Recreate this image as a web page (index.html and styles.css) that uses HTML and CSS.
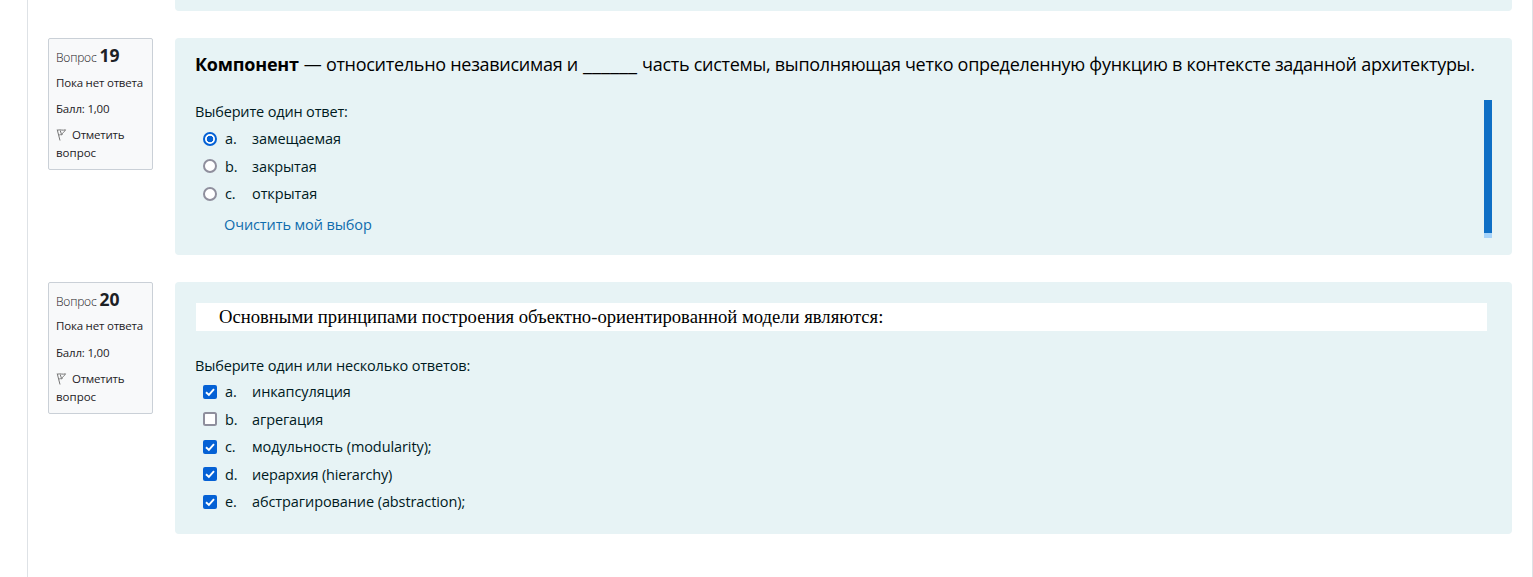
FILE: index.html
```html
<!DOCTYPE html>
<html lang="ru">
<head>
<meta charset="utf-8">
<title>Тест</title>
<link rel="stylesheet" href="styles.css">
</head>
<body>
<main class="page">
  <section class="question question-prev">
    <div class="side"></div>
    <div class="panel panel-prev"></div>
  </section>

  <section class="question question-single">
    <aside class="info">
      <h3 class="info-title"><span class="info-word">Вопрос</span> <span class="info-number">19</span></h3>
      <div class="info-state">Пока нет ответа</div>
      <div class="info-grade">Балл: 1,00</div>
      <div class="info-flag"><svg class="flag" viewBox="0 0 12 14" width="12" height="14"><path d="M1.2 1.5 4 12.5M1.5 2.2C4 1.2 6.500 2.800 9.500 1.800 8.500 4 6.500 4.500 5.800 7 5 6.500 4 6.500 3 7.200M4.200 2.500 5.600 6.600" fill="none" stroke="#777" stroke-width="1"/></svg><span class="flag-label">Отметить</span><br><span>вопрос</span></div>
    </aside>
    <div class="panel">
      <p class="text-single"><b class="term">Компонент</b> <span class="phrase">— относительно независимая и</span> <span class="blank">______</span> <span class="phrase">часть системы, выполняющая четко определенную функцию в контексте заданной архитектуры.</span></p>
      <div class="answer-area">
        <div class="answers">
          <div class="prompt">Выберите один ответ:</div>
          <div class="option"><span class="radio radio-on"></span><span class="letter">a.</span><span>замещаемая</span></div>
          <div class="option"><span class="radio"></span><span class="letter">b.</span><span>закрытая</span></div>
          <div class="option"><span class="radio"></span><span class="letter">c.</span><span>открытая</span></div>
          <a class="clear">Очистить мой выбор</a>
        </div>
        <div class="meter"><div class="meter-fill"></div></div>
      </div>
    </div>
  </section>

  <section class="question question-multi">
    <aside class="info">
      <h3 class="info-title"><span class="info-word">Вопрос</span> <span class="info-number">20</span></h3>
      <div class="info-state">Пока нет ответа</div>
      <div class="info-grade">Балл: 1,00</div>
      <div class="info-flag"><svg class="flag" viewBox="0 0 12 14" width="12" height="14"><path d="M1.2 1.5 4 12.5M1.5 2.2C4 1.2 6.500 2.800 9.500 1.800 8.500 4 6.500 4.500 5.800 7 5 6.500 4 6.500 3 7.200M4.200 2.500 5.600 6.600" fill="none" stroke="#777" stroke-width="1"/></svg><span class="flag-label">Отметить</span><br><span>вопрос</span></div>
    </aside>
    <div class="panel">
      <p class="text-multi">Основными принципами построения объектно-ориентированной модели являются:</p>
      <div class="answers">
        <div class="prompt">Выберите один или несколько ответов:</div>
        <div class="option"><svg class="check" viewBox="0 0 14 14"><rect width="14" height="14" rx="2" fill="#0561d5"/><path d="M3 7.200 5.900 10 11 4.200" fill="none" stroke="#fff" stroke-width="1.900"/></svg><span class="letter">a.</span><span>инкапсуляция</span></div>
        <div class="option"><svg class="check" viewBox="0 0 14 14"><rect x="1" y="1" width="12" height="12" rx="1.500" fill="#fff" stroke="#8f8f9d" stroke-width="2"/></svg><span class="letter">b.</span><span>агрегация</span></div>
        <div class="option"><svg class="check" viewBox="0 0 14 14"><rect width="14" height="14" rx="2" fill="#0561d5"/><path d="M3 7.200 5.900 10 11 4.200" fill="none" stroke="#fff" stroke-width="1.900"/></svg><span class="letter">c.</span><span>модульность (modularity);</span></div>
        <div class="option"><svg class="check" viewBox="0 0 14 14"><rect width="14" height="14" rx="2" fill="#0561d5"/><path d="M3 7.200 5.900 10 11 4.200" fill="none" stroke="#fff" stroke-width="1.900"/></svg><span class="letter">d.</span><span class="tight">иерархия (hierarchy)</span></div>
        <div class="option"><svg class="check" viewBox="0 0 14 14"><rect width="14" height="14" rx="2" fill="#0561d5"/><path d="M3 7.200 5.900 10 11 4.200" fill="none" stroke="#fff" stroke-width="1.900"/></svg><span class="letter">e.</span><span>абстрагирование (abstraction);</span></div>
      </div>
    </div>
  </section>
</main>
</body>
</html>
```
FILE: styles.css
```css
* { box-sizing: border-box; }
body {
  margin: 0;
  background: #fff;
  font-family: "Open Sans", "Noto Sans", sans-serif;
  font-size: 14.5px;
  color: #001a1e;
  overflow: hidden;
}
.page {
  height: 577px;
  margin-left: 27px;
  padding: 0 20px;
  border-left: 1px solid #dee2e6;
  border-right: 1px solid #dee2e6;
}
.question {
  display: grid;
  grid-template-columns: 105px 1337px;
  column-gap: 22px;
  align-items: start;
  margin-bottom: 27px;
}
.panel {
  background: #e7f3f5;
  border-radius: 4px;
  padding: 0 20px;
}
.panel-prev { height: 11px; border-radius: 0 0 4px 4px; }
.question-single .panel { height: 217px; }
.question-multi .panel { height: 252px; padding-top: 21px; }

.info {
  height: 132px;
  padding: 4px 7px;
  background: #f8f9fa;
  border: 1px solid #cad0d7;
  border-radius: 2px;
  font-size: 11.5px;
  line-height: 18px;
  color: #1d2125;
  white-space: nowrap;
}
.info-title {
  display: flex;
  align-items: baseline;
  gap: 3px;
  height: 24px;
  margin: 0;
  line-height: 24px;
  font-weight: 300;
}
.info-word { font-size: 12px; letter-spacing: -0.2px; }
.info-number { font-size: 17.5px; font-weight: 700; }
.info-state { margin-top: 7px; letter-spacing: -0.2px; }
.info-grade { margin-top: 8px; letter-spacing: -0.2px; }
.question-multi .info-state { margin-top: 6px; }
.question-multi .info-grade { margin-top: 9px; }
.info-flag { margin-top: 8px; }
.flag { margin-right: 4px; vertical-align: -3px; }
.flag-label { letter-spacing: -0.25px; }

.text-single {
  display: flex;
  align-items: baseline;
  gap: 5px;
  height: 62px;
  margin: 0;
  padding-top: 14px;
  font-size: 18px;
  line-height: 25px;
  color: #000;
  white-space: nowrap;
}
.term { letter-spacing: -0.22px; }
.phrase { letter-spacing: -0.28px; }
.blank { font-size: 20.6px; line-height: 20px; }
.answer-area { display: flex; justify-content: space-between; }
.meter { width: 8px; height: 138px; background: #a6d3fa; }
.meter-fill { height: 133px; background: #0f6fc5; }

.prompt { height: 25px; line-height: 24px; letter-spacing: -0.16px; white-space: nowrap; }
.option {
  display: grid;
  grid-template-columns: 14px 19px 1fr;
  column-gap: 8px;
  align-items: center;
  height: 27.5px;
  padding-left: 8px;
  letter-spacing: -0.09px;
  white-space: nowrap;
}
.tight { letter-spacing: -0.2px; }
.radio {
  width: 14px;
  height: 14px;
  border: 2px solid #8f8f9d;
  border-radius: 50%;
  background: #fff;
}
.radio-on {
  border-color: #0561d5;
  background: radial-gradient(circle, #0561d5 0 3px, #fff 3.6px);
}
.check { width: 14px; height: 14px; }
.clear {
  display: block;
  margin-left: 29px;
  padding-top: 5px;
  line-height: 24px;
  letter-spacing: -0.1px;
  color: #0f6cad;
}

.text-multi {
  height: 28px;
  margin: 0 5px 0 1px;
  padding-left: 23px;
  background: #fff;
  font-family: "Liberation Serif", serif;
  font-size: 18.66px;
  line-height: 28px;
  color: #000;
}
.question-multi .answers { padding-top: 23px; }
.question-multi .prompt { height: 24px; }
```
